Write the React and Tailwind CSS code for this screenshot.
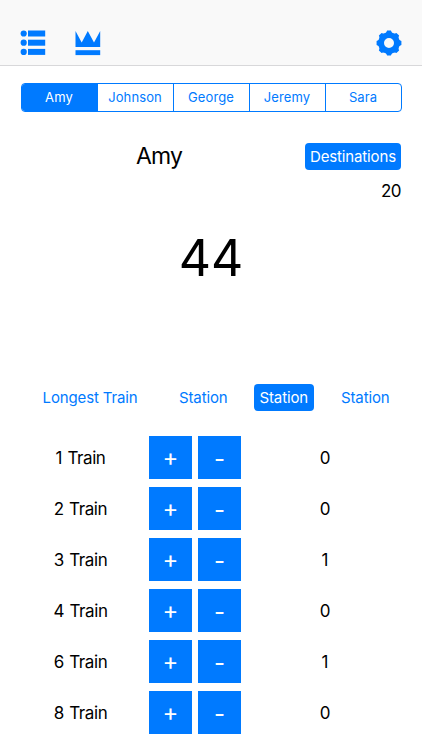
const players = ['Amy', 'Johnson', 'George', 'Jeremy', 'Sara']

const trains = [
  { size: 1, count: 0 },
  { size: 2, count: 0 },
  { size: 3, count: 1 },
  { size: 4, count: 0 },
  { size: 6, count: 1 },
  { size: 8, count: 0 },
]

function ListIcon() {
  return (
    <svg width="26" height="26" viewBox="0 0 26 26" fill="currentColor">
      {[3.5, 12.7, 21.9].map((y) => (
        <g key={y}>
          <circle cx="3.7" cy={y} r="3.1" />
          <rect x="8" y={y - 3} width="17.2" height="6" />
        </g>
      ))}
    </svg>
  )
}

function CrownIcon() {
  return (
    <svg width="26" height="26" viewBox="0 0 26 26" fill="currentColor">
      <path d="M.5 1 L6.7 12.6 L12.8 1 L19 12.6 L25.2 1 V17.1 H.5 Z" />
      <rect x=".5" y="20.2" width="24.7" height="4.9" />
    </svg>
  )
}

function GearIcon() {
  return (
    <svg width="26" height="26" viewBox="-13 -13 26 26" fill="none" stroke="currentColor">
      <circle r="7.9" strokeWidth="5.8" />
      {[0, 45, 90, 135, 180, 225, 270, 315].map((angle) => (
        <path
          key={angle}
          transform={`rotate(${angle})`}
          d="M-3.4 -9.5 L-1.9 -12.4 H1.9 L3.4 -9.5 Z"
          fill="currentColor"
          stroke="none"
        />
      ))}
    </svg>
  )
}

function StepButton({ children }) {
  return (
    <button className="flex h-[43px] w-[43px] items-center justify-center bg-[#007aff] text-2xl leading-none text-white">
      {children}
    </button>
  )
}

function TrainRow({ size, count }) {
  return (
    <div className="flex h-[43px] items-center text-[17px]">
      <span className="w-[81px] pt-[3px] text-center tracking-[-0.4px] [word-spacing:1px]">
        {size} Train
      </span>
      <div className="ml-[28px] flex gap-[6px]">
        <StepButton>
          <span className="pt-px">+</span>
        </StepButton>
        <StepButton>
          <span className="pt-[3px]">-</span>
        </StepButton>
      </div>
      <span className="ml-[64px] w-10 pt-[3px] text-center">{count}</span>
    </div>
  )
}

export default function App() {
  return (
    <div className="h-[750px] overflow-hidden bg-white font-['Inter',sans-serif] text-black">
      {/* Navigation bar */}
      <header className="flex h-[66px] items-start border-b border-[#d8d8da] bg-[#f9f9f9] pt-[30px] pr-5 pl-5 text-[#007aff]">
        <ListIcon />
        <div className="ml-[29px]">
          <CrownIcon />
        </div>
        <div className="ml-auto">
          <GearIcon />
        </div>
      </header>

      {/* Player picker */}
      <div className="mt-[17px] ml-[20.5px] flex h-[29px] w-[381px] overflow-hidden rounded-[4px] border border-[#007aff] text-[13px] tracking-[0.1px]">
        {players.map((player, i) => (
          <button
            key={player}
            className={
              i === 0
                ? 'w-[75px] bg-[#007aff] text-white'
                : 'flex-1 border-l border-[#007aff] text-[#007aff]'
            }
          >
            {player}
          </button>
        ))}
      </div>

      {/* Current player */}
      <div className="mt-[31px] flex h-[27px] items-center pr-[21px] pl-[136px]">
        <h1 className="text-[23px] leading-none tracking-[-0.9px]">Amy</h1>
        <button className="ml-auto h-[27px] w-[96px] rounded-[4px] bg-[#007aff] text-[15px] leading-none tracking-[-0.15px] text-white">
          Destinations
        </button>
      </div>
      <p className="mt-[9px] pr-[21px] text-right text-[17px] leading-6 tracking-[-0.5px]">20</p>
      <p className="mt-[25px] text-center text-[50px] leading-[60px]">44</p>

      {/* Bonuses */}
      <div className="mt-[96px] flex h-[27px] items-center text-[15px] leading-none tracking-[-0.15px] text-[#007aff]">
        <button className="ml-[37px] w-[106px]">Longest Train</button>
        <button className="ml-[30.5px] w-[59.5px]">Station</button>
        <button className="ml-[21px] h-[27px] w-[59.5px] rounded-[4px] bg-[#007aff] text-white">
          Station
        </button>
        <button className="ml-[22px] w-[59.5px]">Station</button>
      </div>

      {/* Train counters */}
      <div className="mt-[25px] flex flex-col gap-2 pl-10">
        {trains.map((train) => (
          <TrainRow key={train.size} size={train.size} count={train.count} />
        ))}
      </div>
    </div>
  )
}
